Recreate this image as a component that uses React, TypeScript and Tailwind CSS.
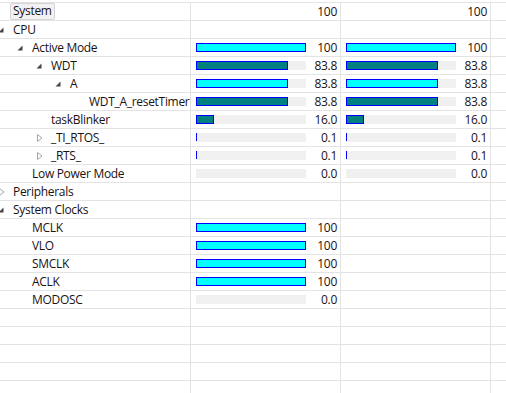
import React from 'react';

type Bar = { pct: number; fill: 'cyan' | 'teal'; value: string };
type Row = {
  label?: string;
  level?: number;
  toggle?: 'open' | 'closed';
  header?: boolean;
  cols?: (Bar | string | null)[];
};

const rows: Row[] = [
  { label: 'System', header: true, cols: ['100', '100'] },
  { label: 'CPU', level: 0, toggle: 'open' },
  {
    label: 'Active Mode',
    level: 1,
    toggle: 'open',
    cols: [
      { pct: 100, fill: 'cyan', value: '100' },
      { pct: 100, fill: 'cyan', value: '100' },
    ],
  },
  {
    label: 'WDT',
    level: 2,
    toggle: 'open',
    cols: [
      { pct: 83.8, fill: 'teal', value: '83.8' },
      { pct: 83.8, fill: 'teal', value: '83.8' },
    ],
  },
  {
    label: 'A',
    level: 3,
    toggle: 'open',
    cols: [
      { pct: 83.8, fill: 'cyan', value: '83.8' },
      { pct: 83.8, fill: 'cyan', value: '83.8' },
    ],
  },
  {
    label: 'WDT_A_resetTimer',
    level: 4,
    cols: [
      { pct: 83.8, fill: 'teal', value: '83.8' },
      { pct: 83.8, fill: 'teal', value: '83.8' },
    ],
  },
  {
    label: 'taskBlinker',
    level: 2,
    cols: [
      { pct: 16, fill: 'teal', value: '16.0' },
      { pct: 16, fill: 'teal', value: '16.0' },
    ],
  },
  {
    label: '_TI_RTOS_',
    level: 2,
    toggle: 'closed',
    cols: [
      { pct: 0.1, fill: 'teal', value: '0.1' },
      { pct: 0.1, fill: 'teal', value: '0.1' },
    ],
  },
  {
    label: '_RTS_',
    level: 2,
    toggle: 'closed',
    cols: [
      { pct: 0.1, fill: 'teal', value: '0.1' },
      { pct: 0.1, fill: 'teal', value: '0.1' },
    ],
  },
  {
    label: 'Low Power Mode',
    level: 1,
    cols: [
      { pct: 0, fill: 'teal', value: '0.0' },
      { pct: 0, fill: 'teal', value: '0.0' },
    ],
  },
  { label: 'Peripherals', level: 0, toggle: 'closed' },
  { label: 'System Clocks', level: 0, toggle: 'open' },
  { label: 'MCLK', level: 1, cols: [{ pct: 100, fill: 'cyan', value: '100' }, null] },
  { label: 'VLO', level: 1, cols: [{ pct: 100, fill: 'cyan', value: '100' }, null] },
  { label: 'SMCLK', level: 1, cols: [{ pct: 100, fill: 'cyan', value: '100' }, null] },
  { label: 'ACLK', level: 1, cols: [{ pct: 100, fill: 'cyan', value: '100' }, null] },
  { label: 'MODOSC', level: 1, cols: [{ pct: 0, fill: 'teal', value: '0.0' }, null] },
  {},
  {},
  {},
  {},
  {},
];

const Toggle = ({ state }: { state: 'open' | 'closed' }) =>
  state === 'open' ? (
    <svg width="6" height="6" viewBox="0 0 6 6" className="shrink-0">
      <polygon points="5.5,0.5 5.5,5.5 0.5,5.5" fill="#454545" />
    </svg>
  ) : (
    <svg width="6" height="8" viewBox="0 0 6 8" className="shrink-0">
      <polygon points="0.5,0.5 5,4 0.5,7.5" fill="none" stroke="#a6a6a6" strokeWidth="1" />
    </svg>
  );

const BarCell = ({ bar }: { bar: Bar }) => {
  const w = Math.round((bar.pct / 100) * 110);
  return (
    <div className="flex h-full items-center pl-[5px] pr-[3px]">
      <div className="relative h-[9px] w-[110px] bg-[#f0f0f0]">
        {bar.pct > 0 && bar.pct < 1 && (
          <div className="absolute left-0 top-0 h-[8px] w-px bg-[#0000ff]" />
        )}
        {bar.pct >= 1 && (
          <div
            className={
              bar.fill === 'cyan'
                ? 'absolute left-0 top-0 h-[9px] border border-[#0000ff] bg-[#00ffff]'
                : 'absolute left-0 top-0 h-[9px] border border-[#0000ff] bg-[#008080]'
            }
            style={{ width: w }}
          />
        )}
      </div>
      <span className="ml-auto">{bar.value}</span>
    </div>
  );
};

const ValueCell = ({ v }: { v: Bar | string | null | undefined }) => {
  if (!v) return null;
  if (typeof v === 'string')
    return <div className="flex h-full items-center justify-end pr-[3px]">{v}</div>;
  return <BarCell bar={v} />;
};

export default function App() {
  return (
    <div
      className="h-[393px] w-[506px] overflow-hidden bg-white pt-[2px] text-[12px] tracking-[-0.3px] text-[#1b1212]"
      style={{ fontFamily: '"Segoe UI", "Open Sans", "Noto Sans", sans-serif' }}
    >
      <div className="border-t border-[#e3e3e3]">
        {rows.map((r, i) => (
          <div
            key={i}
            className="grid h-[18px] grid-cols-[191px_150px_150px_1fr] border-b border-[#e3e3e3] leading-none"
          >
            <div className="flex h-full items-center border-r border-[#e3e3e3]">
              {r.header ? (
                <span className="ml-[10px] rounded-[2px] border border-[#d4d4d4] bg-[#f2f2f2] px-[2px] pb-[2px] pt-[1px]">
                  {r.label}
                </span>
              ) : r.label ? (
                <div
                  className="relative flex items-center"
                  style={{ paddingLeft: 13 + 19 * (r.level ?? 0) }}
                >
                  {r.toggle && (
                    <div
                      className="absolute top-1/2 -translate-y-1/2"
                      style={{ left: 19 * (r.level ?? 0) - (r.toggle === 'open' ? 2 : 1) }}
                    >
                      <Toggle state={r.toggle} />
                    </div>
                  )}
                  <span>{r.label}</span>
                </div>
              ) : null}
            </div>
            <div className="border-r border-[#e3e3e3]">
              <ValueCell v={r.cols?.[0]} />
            </div>
            <div className="border-r border-[#e3e3e3]">
              <ValueCell v={r.cols?.[1]} />
            </div>
            <div />
          </div>
        ))}
      </div>
    </div>
  );
}
